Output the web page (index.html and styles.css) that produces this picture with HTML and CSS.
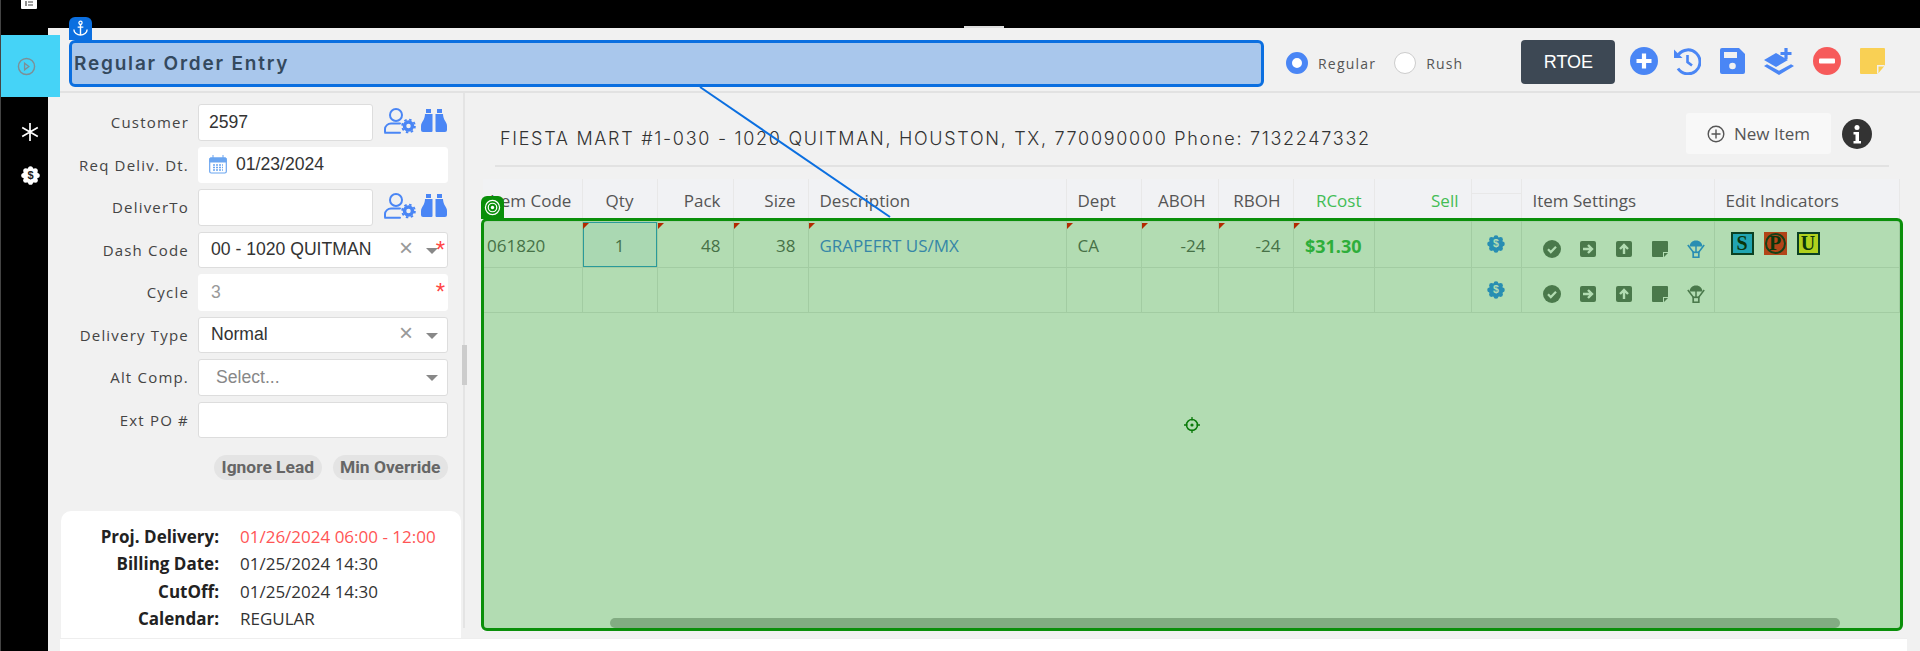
FILE: index.html
```html
<!DOCTYPE html>
<html lang="en">
<head>
  <meta charset="UTF-8" />
  <title>Regular Order Entry</title>
  <link rel="stylesheet" href="styles.css">
</head>
<body>
  <svg class="sprites" width="0" height="0">
    <symbol id="i-user-gear" viewBox="0 0 32 26">
      <circle cx="12" cy="7" r="6" fill="none" stroke="currentColor" stroke-width="2"/>
      <path d="M1 24v-3c0-3 3-5.500 6-5.500h9M1 24.700h15" fill="none" stroke="currentColor" stroke-width="2" stroke-linecap="round"/>
      <circle cx="24.500" cy="18" r="4" fill="none" stroke="currentColor" stroke-width="3.500"/>
      <circle cx="24.500" cy="18" r="6.400" fill="none" stroke="currentColor" stroke-width="1.800" stroke-dasharray="2.500 2.500"/>
    </symbol>
    <symbol id="i-binoculars" viewBox="0 0 26 24">
      <path d="M5 0h5v4H5zM16 0h5v4h-5z" fill="currentColor"/>
      <path d="M4 5h7.500v17a1 1 0 0 1-1 1H2a2 2 0 0 1-2-2v-4c0-4 4-6 4-12zM22 5h-7.500v17a1 1 0 0 0 1 1H24a2 2 0 0 0 2-2v-4c0-4-4-6-4-12z" fill="currentColor"/>
    </symbol>
    <symbol id="i-badge" viewBox="0 0 24 24">
      <circle cx="12" cy="12" r="9.500" fill="currentColor"/>
      <g fill="currentColor">
        <circle cx="12" cy="3.500" r="3.200"/><circle cx="12" cy="20.500" r="3.200"/>
        <circle cx="3.500" cy="12" r="3.200"/><circle cx="20.500" cy="12" r="3.200"/>
        <circle cx="6" cy="6" r="3.200"/><circle cx="18" cy="6" r="3.200"/>
        <circle cx="6" cy="18" r="3.200"/><circle cx="18" cy="18" r="3.200"/>
      </g>
    </symbol>
    <symbol id="i-check" viewBox="0 0 18 18">
      <circle cx="9" cy="9" r="9" fill="currentColor"/>
      <path d="M5 9.300l2.800 2.800L13 6.800" fill="none" stroke="#fff" stroke-width="2.200"/>
    </symbol>
    <symbol id="i-right" viewBox="0 0 18 18">
      <rect x="1" y="1" width="16" height="16" rx="2" fill="currentColor"/>
      <path d="M4 9h8M9 5l4 4-4 4" fill="none" stroke="#fff" stroke-width="2.400"/>
    </symbol>
    <symbol id="i-up" viewBox="0 0 18 18">
      <rect x="1" y="1" width="16" height="16" rx="2" fill="currentColor"/>
      <path d="M9 14V6M5 9l4-4 4 4" fill="none" stroke="#fff" stroke-width="2.400"/>
    </symbol>
    <symbol id="i-note" viewBox="0 0 18 18">
      <path d="M2 1h14a1 1 0 0 1 1 1v10h-5v5H2a1 1 0 0 1-1-1V2a1 1 0 0 1 1-1z" fill="currentColor"/>
      <path d="M13 13h4l-4 4z" fill="currentColor"/>
    </symbol>
    <symbol id="i-chute" viewBox="0 0 18 18">
      <path d="M9 .5C5 .5 3 3 2.500 6.500h13C15 3 13 .5 9 .5z" fill="currentColor"/>
      <path d="M.8 5l5.700 7.500M17.200 5l-5.700 7.500M9 6v6" fill="none" stroke="currentColor" stroke-width="1.500"/>
      <rect x="6.200" y="12.300" width="5.600" height="5" fill="none" stroke="currentColor" stroke-width="1.700"/>
    </symbol>
  </svg>

  <div class="app">
    <!-- left black rail -->
    <nav class="rail">
      <svg class="rail-doc" viewBox="0 0 16 10"><path d="M0 0h16v8a1 1 0 0 1-1 1H1a1 1 0 0 1-1-1z" fill="#fff"/><path d="M5 1v5M7 2h5M7 5h5" stroke="#444" stroke-width="1.200"/></svg>
      <span class="rail-star">
        <svg viewBox="0 0 18 18"><path d="M9 0v18M1.200 4.500l15.600 9M16.800 4.500l-15.600 9" stroke="#fff" stroke-width="1.700"/></svg>
      </span>
      <span class="rail-badge">
        <svg viewBox="0 0 24 24"><use href="#i-badge"/><text x="12" y="16.500" class="badge-text dark">$</text></svg>
      </span>
    </nav>
    <div class="rail-active">
      <svg viewBox="0 0 20 20"><circle cx="10" cy="10" r="8.500" fill="none" stroke="#7d8f96" stroke-width="1.500"/><path d="M8 6.500l4.500 3.500L8 13.500z" fill="none" stroke="#7d8f96" stroke-width="1.400"/></svg>
    </div>
    <div class="top-notch"></div>

    <main class="main">
      <header class="topbar">
        <div class="title-box">
          <span class="anchor-tab">
            <svg viewBox="0 0 18 18"><circle cx="9" cy="3" r="1.700" fill="none" stroke="#fff" stroke-width="1.300"/><path d="M9 4.700V16M6 7.500h6M2 10c0 3.500 3.500 6 7 6s7-2.500 7-6" fill="none" stroke="#fff" stroke-width="1.500"/></svg>
          </span>
          Regular Order Entry
        </div>
        <label class="radio on"><i></i>Regular</label>
        <label class="radio"><i></i>Rush</label>
        <button class="rtoe">RTOE</button>
        <div class="tb-icons">
          <svg class="tb-hist-prev" width="28" height="28" viewBox="0 0 28 28"><circle cx="14" cy="14" r="14" fill="#4a86f5"/><path d="M14 6.500v15M6.500 14h15" stroke="#fff" stroke-width="4.200"/></svg>
          <svg width="28" height="28" viewBox="0 0 28 28"><path d="M5.500 7.500A12 12 0 1 1 5 21.500" fill="none" stroke="#4a86f5" stroke-width="3"/><path d="M1 2.500v8.500h8.500z" fill="#4a86f5"/><path d="M14.500 8v7l4.500 3.500" fill="none" stroke="#4a86f5" stroke-width="2.600"/></svg>
          <svg width="25" height="26" viewBox="0 0 25 26"><path d="M2 0h17l6 6v18a2 2 0 0 1-2 2H2a2 2 0 0 1-2-2V2a2 2 0 0 1 2-2z" fill="#4a86f5"/><rect x="4" y="4" width="13" height="6" fill="#f1f1f1"/><circle cx="12.500" cy="18" r="3.300" fill="#f1f1f1"/></svg>
          <svg width="30" height="28" viewBox="0 0 30 28"><path d="M0 13l12-7 12 7-12 7z" fill="#4a86f5"/><path d="M0 19l3-1.700 12 6.500 12-6.500 3 1.700-15 9z" fill="#4a86f5"/><path d="M22 1v11M16.500 6.500h11" stroke="#4a86f5" stroke-width="3.200"/></svg>
          <svg width="28" height="28" viewBox="0 0 28 28"><circle cx="14" cy="14" r="14" fill="#f65a5a"/><rect x="6" y="11.500" width="16" height="5" rx="1" fill="#fff"/></svg>
          <svg width="25" height="26" viewBox="0 0 25 26"><path d="M1 0h23a1 1 0 0 1 1 1v16l-8 9H1a1 1 0 0 1-1-1V1a1 1 0 0 1 1-1z" fill="#f9d054"/><path d="M17 26v-9h8z" fill="#f1f1f1"/><path d="M18.500 25v-6.500H24z" fill="#f9d054"/></svg>
        </div>
      </header>

      <div class="content">
        <aside class="side">
          <form class="order-form">
            <div class="row">
              <label>Customer</label>
              <input class="short" type="text" value="2597" />
              <svg class="ico-user"><use href="#i-user-gear"/></svg>
              <svg class="ico-bino"><use href="#i-binoculars"/></svg>
            </div>
            <div class="row">
              <label>Req Deliv. Dt.</label>
              <div class="date-field">
                <svg width="18" height="19" viewBox="0 0 18 19"><rect x=".7" y="3" width="16.600" height="15" rx="1.500" fill="#fff" stroke="#6aa5f0" stroke-width="1.200"/><path d="M1 3h16v4H1zM4 0v3M14 0v3" fill="#6aa5f0" stroke="#6aa5f0"/><path d="M4 10h10M4 12.500h10M4 15h10" stroke="#6aa5f0" stroke-width="1.500" stroke-dasharray="2 1"/></svg>
                <span>01/23/2024</span>
              </div>
            </div>
            <div class="row">
              <label>DeliverTo</label>
              <input class="short" type="text" />
              <svg class="ico-user"><use href="#i-user-gear"/></svg>
              <svg class="ico-bino"><use href="#i-binoculars"/></svg>
            </div>
            <div class="row">
              <label>Dash Code</label>
              <div class="select"><span>00 - 1020 QUITMAN</span><b class="clear">×</b><i class="caret"></i><em class="req">*</em></div>
            </div>
            <div class="row">
              <label>Cycle</label>
              <div class="select plain"><span>3</span><em class="req">*</em></div>
            </div>
            <div class="row">
              <label>Delivery Type</label>
              <div class="select"><span>Normal</span><b class="clear">×</b><i class="caret"></i></div>
            </div>
            <div class="row">
              <label>Alt Comp.</label>
              <div class="select empty"><span>Select...</span><i class="caret"></i></div>
            </div>
            <div class="row">
              <label>Ext PO #</label>
              <input type="text" />
            </div>
          </form>

          <div class="pills">
            <span class="pill">Ignore Lead</span>
            <span class="pill">Min Override</span>
          </div>

          <dl class="dates">
            <dt>Proj. Delivery:</dt><dd class="late">01/26/2024 06:00 - 12:00</dd>
            <dt>Billing Date:</dt><dd>01/25/2024 14:30</dd>
            <dt>CutOff:</dt><dd>01/25/2024 14:30</dd>
            <dt>Calendar:</dt><dd>REGULAR</dd>
          </dl>
          <span class="side-thumb"></span>
        </aside>

        <section class="items">
          <div class="items-head">
            <h3>FIESTA MART #1-030 - 1020 QUITMAN, HOUSTON, TX, 770090000 Phone: 7132247332</h3>
            <button class="new-item">
              <svg width="18" height="18" viewBox="0 0 18 18"><circle cx="9" cy="9" r="7.800" fill="none" stroke="#555" stroke-width="1.400"/><path d="M9 4.500v9M4.500 9h9" stroke="#555" stroke-width="1.400"/></svg>
              New Item
            </button>
            <svg class="info" width="30" height="30" viewBox="0 0 30 30"><circle cx="15" cy="15" r="15" fill="#333"/><circle cx="15" cy="8.500" r="2.500" fill="#fff"/><path d="M11.500 13h5.500v9h2v2.500h-7.500V22h2v-6.500h-2z" fill="#fff"/></svg>
          </div>

          <div class="grid-wrap">
            <table class="grid">
              <colgroup>
                <col style="width:99px"><col style="width:75px"><col style="width:76px"><col style="width:75px">
                <col style="width:258px"><col style="width:75px"><col style="width:77px"><col style="width:75px">
                <col style="width:81px"><col style="width:97px"><col style="width:50px"><col style="width:193px"><col>
              </colgroup>
              <thead>
                <tr>
                  <th class="code">Item Code</th>
                  <th class="mid">Qty</th>
                  <th class="num">Pack</th>
                  <th class="num">Size</th>
                  <th>Description</th>
                  <th>Dept</th>
                  <th class="num">ABOH</th>
                  <th class="num">RBOH</th>
                  <th class="num money">RCost</th>
                  <th class="num money">Sell</th>
                  <th class="split"><div></div></th>
                  <th>Item Settings</th>
                  <th>Edit Indicators</th>
                </tr>
              </thead>
              <tbody>
                <tr>
                  <td class="code">061820</td>
                  <td class="mid flag selected">1</td>
                  <td class="num flag">48</td>
                  <td class="num flag">38</td>
                  <td class="flag link">GRAPEFRT US/MX</td>
                  <td class="flag">CA</td>
                  <td class="num flag">-24</td>
                  <td class="num flag">-24</td>
                  <td class="num flag cost">$31.30</td>
                  <td></td>
                  <td class="mid badge-cell"><svg viewBox="0 0 24 24"><use href="#i-badge"/><text x="12" y="16.500" class="badge-text">$</text></svg></td>
                  <td class="settings">
                    <svg><use href="#i-check"/></svg><svg><use href="#i-right"/></svg><svg><use href="#i-up"/></svg><svg><use href="#i-note"/></svg><svg class="blue"><use href="#i-chute"/></svg>
                  </td>
                  <td class="marks">
                    <span class="mark s">S</span><span class="mark p">P</span><span class="mark u">U</span>
                  </td>
                </tr>
                <tr>
                  <td></td><td></td><td></td><td></td><td></td><td></td><td></td><td></td><td></td><td></td>
                  <td class="mid badge-cell"><svg viewBox="0 0 24 24"><use href="#i-badge"/><text x="12" y="16.500" class="badge-text">$</text></svg></td>
                  <td class="settings">
                    <svg><use href="#i-check"/></svg><svg><use href="#i-right"/></svg><svg><use href="#i-up"/></svg><svg><use href="#i-note"/></svg><svg><use href="#i-chute"/></svg>
                  </td>
                  <td></td>
                </tr>
              </tbody>
            </table>
            <span class="h-thumb"></span>

            <!-- green selection overlay -->
            <div class="pick">
              <span class="pick-tab">
                <svg viewBox="0 0 18 18"><circle cx="9" cy="9" r="7.500" fill="none" stroke="#fff" stroke-width="1.300"/><circle cx="9" cy="9" r="4.500" fill="none" stroke="#fff" stroke-width="1.300"/><circle cx="9" cy="9" r="1.800" fill="#fff"/></svg>
              </span>
              <svg class="pick-aim" width="16" height="16" viewBox="0 0 16 16"><circle cx="8" cy="8" r="5.500" fill="none" stroke="#0a7a0a" stroke-width="1.500"/><circle cx="8" cy="8" r="1.600" fill="#0a7a0a"/><path d="M8 0v3.500M8 12.500V16M0 8h3.500M12.500 8H16" stroke="#0a7a0a" stroke-width="1.300"/></svg>
            </div>
          </div>
        </section>
      </div>

      <footer class="foot"></footer>
    </main>

    <!-- connector from the title box to the grid -->
    <svg class="connector" width="1920" height="651" viewBox="0 0 1920 651"><line x1="700" y1="87" x2="890" y2="217" stroke="#0b6fe0" stroke-width="2"/></svg>
  </div>
</body>
</html>
```

FILE: styles.css
```css
* { box-sizing: border-box; }
html, body { margin: 0; height: 100%; overflow: hidden; }
body { font-family: "Open Sans", "Noto Sans", sans-serif; background: #000; color: #333; }
.sprites { position: absolute; }

.app { position: relative; display: flex; height: 651px; overflow: hidden; }

/* rail */
.rail {
  width: 48px;
  flex: none;
  background: #000;
  border-left: 1px solid #444;
  display: flex;
  flex-direction: column;
  align-items: center;
  padding-left: 11px;
}
.rail-doc { margin-right: 2px; display: block; }
.rail-star { display: block; width: 18px; height: 18px; margin-top: 113px; }
.rail-badge { display: block; width: 19px; height: 19px; margin-top: 25px; color: #fff; }
.rail svg { display: block; width: 100%; height: 100%; }
.rail .rail-doc { width: 16px; height: 10px; }
.rail-active {
  position: absolute;
  left: 1px;
  top: 35px;
  width: 59px;
  height: 62px;
  background: #45d3f7;
  display: flex;
  align-items: center;
  justify-content: center;
  padding-right: 9px;
}
.rail-active svg { width: 19px; height: 19px; }
.top-notch { position: absolute; left: 964px; top: 26px; width: 40px; height: 2px; background: #ddd; }

/* main */
.main { flex: 1; margin-top: 28px; background: #f1f1f1; display: flex; flex-direction: column; min-width: 0; }

.topbar {
  height: 65px;
  flex: none;
  padding: 12px 0 0 21px;
  border-bottom: 2px solid #e2e2e2;
  display: flex;
  align-items: flex-start;
}
.title-box {
  position: relative;
  width: 1195px;
  height: 47px;
  background: #a9c7ec;
  border: 3px solid #0b6fe0;
  border-radius: 6px;
  padding-left: 2px;
  font-family: Inter, sans-serif;
  font-size: 19px;
  font-weight: 600;
  letter-spacing: 1.8px;
  line-height: 41px;
  color: #34495e;
}
.anchor-tab {
  position: absolute;
  left: -3px;
  top: -26px;
  width: 23px;
  height: 23px;
  background: #0b6fe0;
  border-radius: 6px 6px 0 0;
  padding: 3px;
  display: block;
}
.anchor-tab svg { display: block; width: 17px; height: 17px; }

.radio {
  display: flex;
  align-items: center;
  gap: 10px;
  height: 22px;
  margin: 12px 0 0 22px;
  font-size: 14px;
  letter-spacing: 1.2px;
  color: #555;
}
.radio + .radio { margin-left: 18px; }
.radio i { display: block; width: 22px; height: 22px; border-radius: 50%; background: #fff; border: 1px solid #ccc; }
.radio.on i { border: 6.500px solid #4a86f5; }

.rtoe {
  margin-left: 58px;
  width: 94px;
  height: 44px;
  background: #3d4854;
  color: #fff;
  border: none;
  border-radius: 4px;
  font-family: "Liberation Sans", sans-serif;
  font-size: 18px;
}
.tb-icons { display: flex; align-items: center; gap: 19px; margin: 7px 0 0 15px; }
.tb-icons svg { display: block; flex: none; }
.tb-icons .tb-hist-prev { margin-right: -4px; }

.content { flex: 1; display: flex; min-height: 0; }

/* left form */
.side {
  position: relative;
  width: 417px;
  flex: none;
  padding-top: 11px;
  margin-bottom: 10px;
  border-right: 2px solid #e4e4e4;
}
.order-form { display: flex; flex-direction: column; gap: 6px; }
.row { display: flex; align-items: stretch; height: 36.500px; }
.row label {
  width: 141px;
  flex: none;
  margin-right: 9px;
  text-align: right;
  font-size: 15px;
  letter-spacing: 1.2px;
  line-height: 37px;
  color: #444;
}
.row input,
.select,
.date-field {
  width: 250px;
  background: #fff;
  border: 1px solid #ddd;
  border-radius: 3px;
  font-family: "Liberation Sans", sans-serif;
  font-size: 17.600px;
  color: #333;
}
.row input { padding: 0 10px; outline: none; }
.row input.short { width: 175px; }
.ico-user { width: 32px; height: 26px; margin: 4px 0 0 11px; color: #4a86f5; }
.ico-bino { width: 26px; height: 24px; margin: 5px 0 0 5px; color: #4a86f5; }
.date-field { display: flex; align-items: center; gap: 9px; padding-left: 10px; border-color: #fff; }
.date-field span { display: block; }
.select { position: relative; display: flex; align-items: center; padding-left: 12px; }
.select.plain { border-color: #fff; color: #999; }
.select.empty { color: #888; padding-left: 17px; }
.clear { position: absolute; right: 34px; top: 5px; font-weight: normal; font-size: 24px; line-height: 20px; color: #999; }
.caret {
  position: absolute;
  right: 9px;
  top: 15px;
  border-left: 6px solid transparent;
  border-right: 6px solid transparent;
  border-top: 6px solid #888;
}
.req { position: absolute; right: 2px; top: 7px; font-style: normal; font-size: 24px; line-height: 20px; color: #f44; }

.pills { display: flex; justify-content: flex-end; gap: 11px; margin: 17px 15px 0 0; }
.pill {
  height: 25px;
  padding: 0 7.500px;
  border-radius: 13px;
  background: #e4e4e4;
  font-family: Roboto, sans-serif;
  font-size: 17.400px;
  font-weight: 700;
  line-height: 25px;
  color: #666;
}

.dates {
  margin: 31px 0 0 13px;
  width: 400px;
  height: 127px;
  padding-top: 12px;
  background: #fff;
  border-radius: 10px 10px 0 0;
  display: grid;
  grid-template-columns: 158px 1fr;
  grid-auto-rows: 27.300px;
  column-gap: 21px;
  font-size: 17px;
  line-height: 27px;
}
.dates dt { text-align: right; font-weight: 700; color: #222; white-space: nowrap; }
.dates dd { margin: 0; white-space: nowrap; }
.dates .late { color: #f55; }
.side-thumb { position: absolute; right: -4px; top: 252px; width: 5px; height: 40px; background: #ccc; }

/* right side */
.items { flex: 1; min-width: 0; display: flex; flex-direction: column; }
.items-head {
  height: 74px;
  margin: 0 31px 0 30px;
  padding: 12px 0 0 5px;
  border-bottom: 2px solid #e2e2e2;
  display: flex;
  align-items: center;
}
.items-head h3 {
  margin: 6px 0 0;
  flex: 1;
  font-family: Inter, sans-serif;
  font-size: 18px;
  font-weight: 300;
  letter-spacing: 1.7px;
  white-space: nowrap;
  color: #333;
}
.new-item {
  width: 145px;
  height: 41px;
  margin-bottom: 3px;
  background: #f8f8f8;
  border: none;
  border-radius: 3px;
  display: flex;
  align-items: center;
  justify-content: center;
  gap: 9px;
  font-family: "Open Sans", sans-serif;
  font-size: 17px;
  color: #555;
}
.info { margin: 0 17px 3px 11px; }

.grid-wrap { position: relative; flex: 1; margin: 12px 20px 7px 18px; background: #fff; }
.grid { width: 100%; border-collapse: collapse; table-layout: fixed; font-size: 17px; color: #666; }
.grid th {
  height: 43px;
  padding: 0 11px;
  background: #f1f2f4;
  border-right: 1px solid #e8e8e8;
  text-align: left;
  font-weight: 400;
  color: #555;
  white-space: nowrap;
}
.grid td {
  position: relative;
  height: 45px;
  padding: 3px 11px 0;
  border-right: 1px solid #e9e9e9;
  border-bottom: 1px solid #e9e9e9;
  white-space: nowrap;
}
.grid .code { padding-left: 4px; }
.grid th.code { padding-left: 7px; }
.grid .mid { text-align: center; }
.grid .num { text-align: right; padding-right: 12px; }
.grid .money { color: #43bd55; }
.grid .cost { color: #43bd55; font-size: 18px; font-weight: 700; }
.grid .link { color: #4e85f0; }
.grid .flag::before {
  content: "";
  position: absolute;
  left: 0;
  top: 1px;
  border-top: 6px solid #f00;
  border-right: 6px solid transparent;
}
.grid .selected { background: #f4f9ff; box-shadow: inset 0 0 0 1px #3da1dd; }
.grid .split { padding: 0; vertical-align: top; }
.split div { height: 15px; border-bottom: 1px solid #e8e8e8; }

.grid .badge-cell { padding: 0; color: #3a90ff; }
.badge-cell svg { display: block; width: 18px; height: 18px; margin: 0 auto; }
.badge-text { font-family: "Liberation Sans", sans-serif; font-size: 14px; font-weight: 700; fill: #fff; text-anchor: middle; }
.badge-text.dark { fill: #222; }

.grid .settings { padding: 5px 0 0 21px; color: #6b726c; }
.settings svg { display: inline-block; width: 18px; height: 18px; margin-right: 18px; vertical-align: middle; }
.settings svg.blue { color: #3a90ff; }

.grid .marks { padding: 0 0 0 16px; vertical-align: top; }
.mark {
  display: inline-block;
  position: relative;
  width: 23px;
  height: 23px;
  margin: 10px 10px 0 0;
  border: 2px solid #123;
  font-family: "Liberation Serif", serif;
  font-size: 20px;
  font-weight: 700;
  line-height: 19px;
  text-align: center;
  color: #111;
}
.mark.s { background: #30b0ff; }
.mark.p { background: #ff2823; border-color: #ff2823; }
.mark.p::after {
  content: "";
  position: absolute;
  inset: -1px;
  border: 2px solid #222;
  border-radius: 50%;
}
.mark.u { background: #fef02b; }

.h-thumb { position: absolute; left: 127px; right: 60px; bottom: 3px; height: 10px; border-radius: 5px; background: #bababa; }

.pick {
  position: absolute;
  left: -2px;
  right: -3px;
  top: 39px;
  bottom: 0;
  background: rgba(0, 140, 0, 0.3);
  border: 3px solid #0a8f0a;
  border-radius: 6px;
  display: flex;
  align-items: center;
  justify-content: center;
}
.pick-tab {
  position: absolute;
  left: -3px;
  top: -25px;
  width: 23px;
  height: 23px;
  padding: 3px;
  background: #0a8f0a;
  border-radius: 6px 6px 0 0;
}
.pick-tab svg { display: block; width: 17px; height: 17px; }

.foot { height: 13px; flex: none; margin: 0 13px 0 12px; background: #fff; border-top: 1px solid #eee; }

.connector { position: absolute; left: 0; top: 0; pointer-events: none; }
```
